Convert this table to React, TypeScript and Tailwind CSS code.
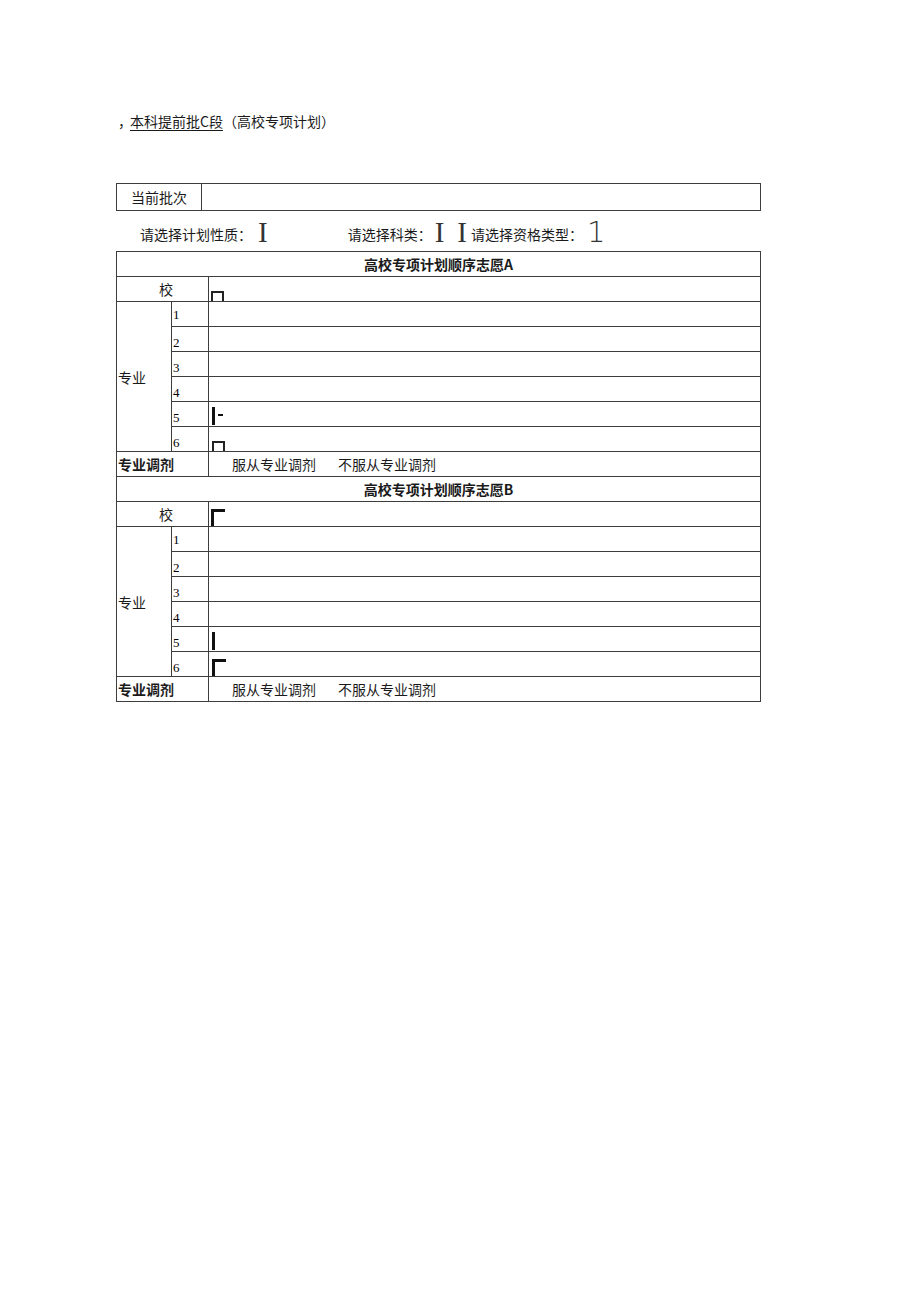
const cjk = { fontFamily: "'Noto Sans CJK SC', 'Liberation Sans', sans-serif" }

type Mark = "square" | "corner" | "bar" | "barDash" | null

function Glyph({ kind }: { kind: Mark }) {
    if (kind === "square") return <span className="block w-[13px] h-[10px] border-t-2 border-x-2 border-[#222]" />
    if (kind === "corner") return <span className="block w-[14px] h-[17px] border-t-[3px] border-l-[3px] border-[#111]" />
    if (kind === "bar") return <span className="block w-[3px] h-[18px] bg-[#111] mb-[1px]" />
    if (kind === "barDash")
        return (
            <span className="flex items-start gap-[3px] mb-[1px]">
                <span className="block w-[3px] h-[18px] bg-[#111]" />
                <span className="block w-[5px] h-[2px] bg-[#111] mt-[7px]" />
            </span>
        )
    return null
}

const line = "border border-[#3d3d3d]"

function Block({ title, marks }: { title: string; marks: Mark[] }) {
    const rows = [1, 2, 3, 4, 5, 6]
    return (
        <>
            <tr className="h-[25px]">
                <td colSpan={3} className={`${line} text-center font-bold text-[14px] leading-none`}>{title}</td>
            </tr>
            <tr className="h-[25px]">
                <td colSpan={2} className={`${line} text-center pl-[7px] text-[14px] leading-none`}>校</td>
                <td className={`${line} align-bottom pl-[2px] p-0`}>
                    <div className="flex items-end h-[24px]"><Glyph kind={marks[0]} /></div>
                </td>
            </tr>
            {rows.map((n, i) => (
                <tr key={n} className="h-[25px]">
                    {i === 0 && (
                        <td rowSpan={6} className={`${line} align-middle pl-[1px] text-[14px] leading-none`}>专业</td>
                    )}
                    <td className={`${line} align-bottom p-0 pl-[1px]`}>
                        <div className={`text-[13px] leading-none text-black ${i === 0 ? "pb-[5px]" : "pb-[2px]"}`}
                            style={{ fontFamily: "'Liberation Serif', serif" }}>{n}</div>
                    </td>
                    <td className={`${line} align-bottom p-0 pl-[3px]`}>
                        <div className="flex items-end h-[24px]"><Glyph kind={marks[n]} /></div>
                    </td>
                </tr>
            ))}
            <tr className="h-[25px]">
                <td colSpan={2} className={`${line} font-bold text-[14px] leading-none pl-[1px]`}>专业调剂</td>
                <td className={`${line} text-[14px] leading-none`}>
                    <div className="flex pl-[23px]">
                        <span>服从专业调剂</span>
                        <span className="ml-[22px]">不服从专业调剂</span>
                    </div>
                </td>
            </tr>
        </>
    )
}

export default function App() {
    const bigI = "text-[29px] leading-none text-[#333] font-light"
    const serif = { fontFamily: "'Liberation Serif', serif" }
    return (
        <div className="w-[920px] min-h-[1301px] bg-white pt-[111px] pl-[116px] text-[#1a1a1a]" style={cjk}>
            {/* heading */}
            <div className="h-[20px] text-[14px] leading-[20px] pl-[2px] flex">
                <span className="w-[12px]">，</span>
                <span className="underline underline-offset-[3px]">本科提前批C段</span>
                <span>（高校专项计划）</span>
            </div>

            {/* current batch */}
            <div className="mt-[52px] w-[645px] h-[28px] border border-[#3d3d3d] flex">
                <div className="w-[85px] border-r border-[#3d3d3d] flex items-center justify-center text-[14px]">当前批次</div>
                <div className="flex-1" />
            </div>

            {/* selectors */}
            <div className="h-[40px] pt-[6px] flex items-center text-[14px]">
                <span className="ml-[24px]">请选择计划性质：</span>
                <span className={`${bigI} ml-[6px] -mt-[4px]`} style={serif}>I</span>
                <span className="ml-[80px]">请选择科类：</span>
                <span className={`${bigI} ml-[3px] -mt-[4px]`} style={serif}>I</span>
                <span className={`${bigI} ml-[13px] -mt-[4px]`} style={serif}>I</span>
                <span className="ml-[4px]">请选择资格类型：</span>
                <span className={`${bigI} ml-[4px] -mt-[4px]`} style={{ fontFamily: "'DejaVu Sans', sans-serif", fontWeight: 200 }}>1</span>
            </div>

            {/* preference tables */}
            <table className="border-collapse w-[645px] table-fixed">
                <colgroup>
                    <col className="w-[55px]" />
                    <col className="w-[37px]" />
                    <col />
                </colgroup>
                <tbody>
                    <Block title="高校专项计划顺序志愿A" marks={["square", null, null, null, null, "barDash", "square"]} />
                    <Block title="高校专项计划顺序志愿B" marks={["corner", null, null, null, null, "bar", "corner"]} />
                </tbody>
            </table>
        </div>
    )
}
